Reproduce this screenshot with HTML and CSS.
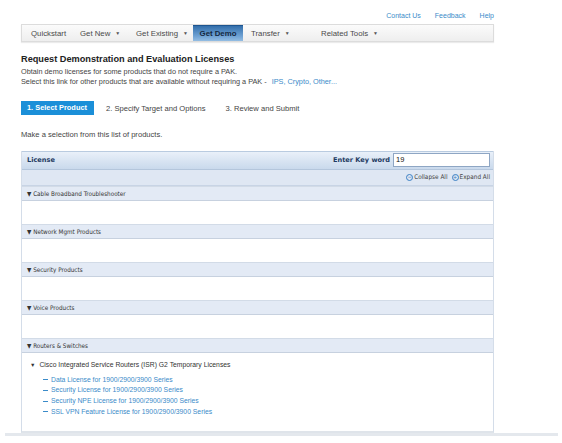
FILE: index.html
```html
<!DOCTYPE html>
<html>
<head>
<meta charset="utf-8">
<link rel="stylesheet" href="styles.css">
</head>
<body>
<div class="page">
  <div class="toplinks">
    <a href="#">Contact Us</a>
    <a href="#">Feedback</a>
    <a href="#">Help</a>
  </div>
  <ul class="nav">
    <li class="item w-quick">Quickstart</li>
    <li class="item w-new">Get New <span class="caret">▼</span></li>
    <li class="item w-exist">Get Existing <span class="caret">▼</span></li>
    <li class="item active">Get Demo</li>
    <li class="item w-transfer">Transfer <span class="caret">▼</span></li>
    <li class="item">Related Tools <span class="caret">▼</span></li>
  </ul>
  <h1 class="title">Request Demonstration and Evaluation Licenses</h1>
  <p class="intro">Obtain demo licenses for some products that do not require a PAK.<br>Select this link for other products that are available without requiring a PAK - <a href="#" class="link">IPS, Crypto, Other...</a></p>
  <div class="steps">
    <span class="step current">1. Select Product</span>
    <span class="step">2. Specify Target and Options</span>
    <span class="step">3. Review and Submit</span>
  </div>
  <p class="hint">Make a selection from this list of products.</p>
  <div class="table">
    <div class="thead">
      <span class="th">License</span>
      <label class="kw">Enter Key word <span class="input">19</span></label>
    </div>
    <div class="tools">
      <span class="tool"><span class="circ">−</span>Collapse All</span>
      <span class="tool"><span class="circ">+</span>Expand All</span>
    </div>
    <div class="cat"><div class="cat-head">▼ Cable Broadband Troubleshooter</div><div class="cat-body"></div></div>
    <div class="cat"><div class="cat-head">▼ Network Mgmt Products</div><div class="cat-body"></div></div>
    <div class="cat"><div class="cat-head">▼ Security Products</div><div class="cat-body"></div></div>
    <div class="cat"><div class="cat-head">▼ Voice Products</div><div class="cat-body"></div></div>
    <div class="cat"><div class="cat-head">▼ Routers &amp; Switches</div>
      <div class="cat-body tree-body">
        <div class="node"><span class="tri">▼</span>Cisco Integrated Service Routers (ISR) G2 Temporary Licenses</div>
        <ul class="leaves">
          <li><span class="dash"></span><a href="#">Data License for 1900/2900/3900 Series</a></li>
          <li><span class="dash"></span><a href="#">Security License for 1900/2900/3900 Series</a></li>
          <li><span class="dash"></span><a href="#">Security NPE License for 1900/2900/3900 Series</a></li>
          <li><span class="dash"></span><a href="#">SSL VPN Feature License for 1900/2900/3900 Series</a></li>
        </ul>
      </div>
    </div>
  </div>
  <div class="foot"></div>
</div>
</body>
</html>
```

FILE: styles.css
```css
* { box-sizing: border-box; }
html, body { margin: 0; padding: 0; background: #fff; }
body { font-family: "Liberation Sans", Arial, sans-serif; color: #3a3a3a; }
a { text-decoration: none; color: #2f87c8; }

.page { width: 473px; margin-left: 21px; }

.toplinks { display: flex; justify-content: flex-end; gap: 14px; height: 24px; padding-top: 11px; font-size: 7px; line-height: 10px; }
.toplinks a { color: #3a8bc9; }

.nav { list-style: none; margin: 0; padding: 0; display: flex; height: 18px; background: linear-gradient(#fbfbfb, #eeeeee); border: 1px solid #dcdcdc; box-shadow: 0 1px 1px rgba(0,0,0,0.08); font-size: 7.8px; }
.nav .item { display: flex; align-items: center; flex-shrink: 0; white-space: nowrap; padding: 0 0 0 8px; color: #4a4a4a; height: 16px; }
.nav .w-quick { width: 50px; padding-left: 9px; }
.nav .w-new { width: 56px; }
.nav .w-exist { width: 65px; }
.nav .active { width: 50px; padding: 0; justify-content: center; background: linear-gradient(#2d6aa8, #6fa2d4 70%, #93bde3); color: #15283f; font-weight: bold; box-shadow: inset 0 1px 0 #1e5590; }
.nav .w-transfer { width: 70px; }
.caret { font-size: 5px; margin-left: 5px; color: #555; }

.title { margin: 11.5px 0 0; font-size: 9.2px; line-height: 11px; font-weight: bold; color: #222; }
.intro { margin: 2.5px 0 0; font-size: 7.3px; line-height: 9.5px; color: #444; }
.intro .link { color: #3a8bc9; margin-left: 3px; }

.steps { display: flex; align-items: center; margin-top: 15px; height: 14px; font-size: 7.6px; }
.step { color: #444; margin-right: 20px; }
.step.current { background: #1b8fd8; color: #fff; font-weight: bold; height: 14px; line-height: 14px; padding: 0 6px; width: 73px; margin-right: 12px; font-size: 7.4px; }

.hint { margin: 14.5px 0 0; font-size: 7.6px; line-height: 9px; color: #444; }

.table { margin-top: 12px; border-left: 1px solid #d4dde9; border-right: 1px solid #d4dde9; border-bottom: 2px solid #dfe4ea; }
.thead { display: flex; align-items: center; justify-content: space-between; height: 19px; background: linear-gradient(#e9f0f9, #c9d9ec); border-top: 1px solid #b9cbe0; border-bottom: 1px solid #b4c6dc; padding: 0 3px 0 5px; font-family: "DejaVu Sans", Verdana, sans-serif; }
.th { font-size: 6.6px; font-weight: bold; color: #1e3a62; }
.kw { display: flex; align-items: center; font-size: 6.6px; font-weight: bold; color: #1e3a62; }
.input { display: inline-block; margin-left: 3px; width: 97px; height: 14px; background: #fff; border: 1px solid #8ea6c4; color: #111; font-weight: normal; font-family: "Liberation Sans", Arial, sans-serif; font-size: 7.5px; line-height: 12px; padding-left: 2px; }
.tools { display: flex; justify-content: flex-end; align-items: center; gap: 4px; height: 16px; background: #dfe7f3; border-bottom: 1px solid #c8d4e5; padding-right: 3px; font-family: "DejaVu Sans Condensed", "DejaVu Sans", sans-serif; font-size: 6.4px; color: #444; }
.tool { display: flex; align-items: center; }
.circ { display: inline-flex; align-items: center; justify-content: center; width: 7px; height: 7px; border: 1px solid #3a7fc4; border-radius: 50%; font-size: 6px; line-height: 1; color: #3a7fc4; margin-right: 1px; }

.cat-head { height: 15px; background: #e3eaf5; border-top: 1px solid #d2dbe7; border-bottom: 1px solid #c7d1df; font-family: "DejaVu Sans Condensed", "DejaVu Sans", sans-serif; font-size: 6.3px; line-height: 13px; padding-left: 5px; color: #333; }
.cat-body { height: 23px; background: #fff; }
.tree-body { height: 78px; padding: 6px 0 0 8px; font-size: 6.8px; line-height: 11px; }
.node { color: #333; }
.tri { font-size: 5.5px; margin-right: 4px; }
.leaves { list-style: none; margin: 0; padding: 4px 0 0 13px; line-height: 10.7px; }
.leaves li { display: flex; align-items: center; }
.leaves .dash { width: 5px; height: 1px; background: #3a8bc9; margin-right: 3px; }
.leaves a { color: #3a8bc9; }

.foot { height: 3px; margin: 0 -64px 0 -16px; background: #e4e8ed; }
```
